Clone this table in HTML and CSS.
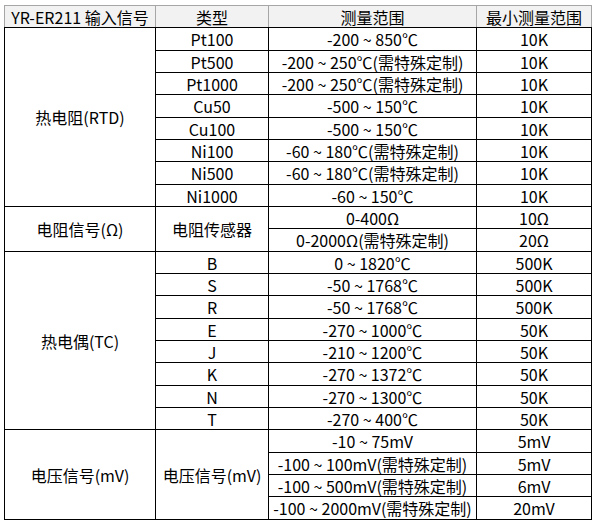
FILE: index.html
```html
<!DOCTYPE html>
<html lang="zh">
<head>
<meta charset="utf-8">
<title>YR-ER211 输入信号</title>
<link rel="stylesheet" href="styles.css">
</head>
<body>
<table class="spec">
<colgroup>
<col class="c1"><col class="c2"><col class="c3"><col class="c4">
</colgroup>
<thead>
<tr class="head"><th>YR-ER211 输入信号</th><th>类型</th><th>测量范围</th><th>最小测量范围</th></tr>
</thead>
<tbody>
<tr class="a"><td rowspan="8">热电阻(RTD)</td><td>Pt100</td><td>-200 ~ 850℃</td><td>10K</td></tr>
<tr class="b"><td>Pt500</td><td>-200 ~ 250℃(需特殊定制)</td><td>10K</td></tr>
<tr class="b"><td>Pt1000</td><td>-200 ~ 250℃(需特殊定制)</td><td>10K</td></tr>
<tr class="a"><td>Cu50</td><td>-500 ~ 150℃</td><td>10K</td></tr>
<tr class="b"><td>Cu100</td><td>-500 ~ 150℃</td><td>10K</td></tr>
<tr class="b"><td>Ni100</td><td>-60 ~ 180℃(需特殊定制)</td><td>10K</td></tr>
<tr class="a"><td>Ni500</td><td>-60 ~ 180℃(需特殊定制)</td><td>10K</td></tr>
<tr class="b"><td>Ni1000</td><td>-60 ~ 150℃</td><td>10K</td></tr>
<tr class="b"><td rowspan="2">电阻信号(Ω)</td><td rowspan="2">电阻传感器</td><td>0-400Ω</td><td>10Ω</td></tr>
<tr class="a"><td>0-2000Ω(需特殊定制)</td><td>20Ω</td></tr>
<tr class="b"><td rowspan="8">热电偶(TC)</td><td>B</td><td>0 ~ 1820℃</td><td>500K</td></tr>
<tr class="b"><td>S</td><td>-50 ~ 1768℃</td><td>500K</td></tr>
<tr class="a"><td>R</td><td>-50 ~ 1768℃</td><td>500K</td></tr>
<tr class="b"><td>E</td><td>-270 ~ 1000℃</td><td>50K</td></tr>
<tr class="b"><td>J</td><td>-210 ~ 1200℃</td><td>50K</td></tr>
<tr class="a"><td>K</td><td>-270 ~ 1372℃</td><td>50K</td></tr>
<tr class="b"><td>N</td><td>-270 ~ 1300℃</td><td>50K</td></tr>
<tr class="b"><td>T</td><td>-270 ~ 400℃</td><td>50K</td></tr>
<tr class="a"><td rowspan="4">电压信号(mV)</td><td rowspan="4">电压信号(mV)</td><td>-10 ~ 75mV</td><td>5mV</td></tr>
<tr class="b"><td>-100 ~ 100mV(需特殊定制)</td><td>5mV</td></tr>
<tr class="b"><td>-100 ~ 500mV(需特殊定制)</td><td>6mV</td></tr>
<tr class="a"><td>-100 ~ 2000mV(需特殊定制)</td><td>20mV</td></tr>
</tbody>
</table>
</body>
</html>
```
FILE: styles.css
```css
html, body {
  margin: 0;
  padding: 0;
  background: #ffffff;
}
body {
  padding: 5px 0 0 4px;
  font-family: "Noto Sans CJK SC", "Noto Sans", sans-serif;
  font-size: 16px;
  color: #000;
}
.spec {
  border-collapse: collapse;
  table-layout: fixed;
  width: 587px;
}
.c1 { width: 151px; }
.c2 { width: 113px; }
.c3 { width: 208px; }
.c4 { width: 115px; }
.spec th, .spec td {
  border: 1px solid #000;
  padding: 0;
  text-align: center;
  vertical-align: middle;
  font-weight: normal;
  line-height: 20px;
  white-space: nowrap;
  overflow: hidden;
}
.head th {
  background: #f2f2f2;
  border-top-color: #a6a6a6;
  border-left-color: #a6a6a6;
  border-right-color: #a6a6a6;
  border-bottom-color: #000;
  height: 21px;
}
tr.a { height: 23px; }
tr.b { height: 22px; }
```
